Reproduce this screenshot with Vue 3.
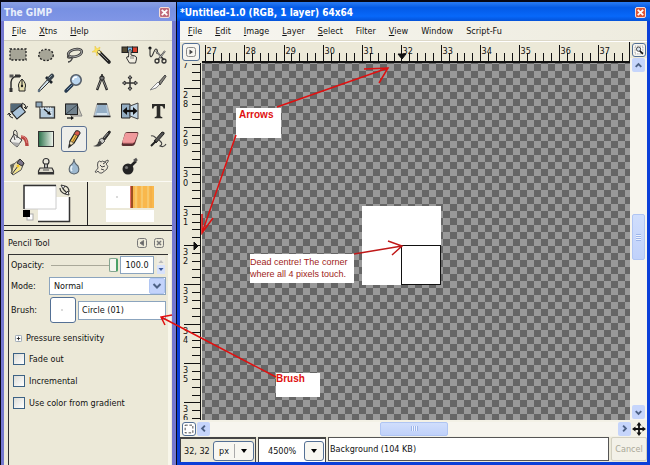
<script setup>
import { ref, computed, onMounted, onUnmounted } from 'vue'

const O = '#222'
const tools = [
  { name: 'Rectangle select', art: `<rect x="3" y="5" width="16" height="11" fill="#a6a597" stroke="${O}" stroke-width="1.3" stroke-dasharray="2 1.6"/>` },
  { name: 'Ellipse select', art: `<ellipse cx="11" cy="11" rx="7.3" ry="5.6" fill="#a6a597" stroke="${O}" stroke-width="1.3" stroke-dasharray="2 1.6"/>` },
  { name: 'Free select', art: `<ellipse cx="12" cy="9" rx="7" ry="3.6" transform="rotate(-14 12 9)" fill="none" stroke="#333" stroke-width="2.6"/><ellipse cx="12" cy="9" rx="7" ry="3.6" transform="rotate(-14 12 9)" fill="none" stroke="#aaa" stroke-width="1"/><path d="M6 11c-2 1-2 3 0 3s4-1 3 1-2 3-4 3" fill="none" stroke="#444" stroke-width="1.3"/>` },
  { name: 'Fuzzy select', art: `<path d="M4 2l2 3 3-2-1 4 3 1-4 1-1 3-1-4-4 0 3-2z" fill="#ffe55a" stroke="#e8c84a" stroke-width=".6"/><path d="M8 8l10 10" stroke="#222" stroke-width="3.6" stroke-linecap="round"/><path d="M8 8l9 9" stroke="#8b8b86" stroke-width="1"/><path d="M7 7l2 2" stroke="#fff6b0" stroke-width="2.4"/>` },
  { name: 'Select by color', art: `<rect x="3" y="3" width="5.500" height="5.500" fill="#544b35" stroke="#222"/><rect x="8.500" y="3" width="5" height="5.500" fill="#7cb6e6" stroke="#222"/><rect x="13.500" y="3" width="5" height="5.500" fill="#d8402c" stroke="#222"/><path d="M10 6q1.500-1 2 0v5l4 1q2 .5 1.500 3l-1 4h-6l-3-5q0-2 2-1z" fill="#f1eee2" stroke="#333"/><path d="M12 12v3M14 12v3" stroke="#555" stroke-width=".7"/>` },
  { name: 'Scissors', art: `<circle cx="3" cy="4" r="1.600" fill="#111"/><path d="M3 4v7q1 4 3-1t3-5q2 0 1 5" fill="none" stroke="#333" stroke-width="1.100"/><path d="M18 7l-7 9M9 7l8 9" stroke="#333" stroke-width="1.800"/><path d="M18 7l-6 8M9 7l5 6" stroke="#ccc" stroke-width=".8"/><circle cx="10" cy="17" r="2" fill="none" stroke="#333" stroke-width="1.300"/><circle cx="17" cy="17" r="2" fill="none" stroke="#333" stroke-width="1.300"/>` },
  { name: 'Paths', art: `<path d="M4 19V10Q5 3 14 4" fill="none" stroke="#222" stroke-width="1.400"/><rect x="2.500" y="2.500" width="4" height="3" fill="#555"/><rect x="2.500" y="16" width="3" height="4" fill="#333"/><rect x="8" y="2.500" width="5" height="3" fill="#333"/><path d="M15 7q5 5 3 9v3h-6v-3q-2-4 3-9z" fill="#e6dfb2" stroke="#222"/><path d="M15 8v6" stroke="#222"/><circle cx="15" cy="14" r="1.200" fill="#222"/>` },
  { name: 'Color picker', art: `<path d="M5 16L13 7l2 2-8 8q-3 3-3 1z" fill="#cfe0ea" stroke="#333"/><path d="M11 5l6 6" stroke="#1d2329" stroke-width="2.600"/><path d="M14 7l3-3" stroke="#39434c" stroke-width="4.500" stroke-linecap="round"/><path d="M14 6l3-3" stroke="#8da0ac" stroke-width="1"/><path d="M4 17q-2 3 0 3t0-3" fill="#9cb8c8" stroke="#567"/>` },
  { name: 'Magnify', art: `<path d="M3 19l6-6" stroke="#26394e" stroke-width="3.400" stroke-linecap="round"/><path d="M4 18l5-5" stroke="#7393b1" stroke-width="1"/><circle cx="13" cy="8" r="5.200" fill="#b9d5ef" stroke="#555e69" stroke-width="1.600"/><path d="M10 8q0-3 4-3" stroke="#fff" stroke-width="1.600" fill="none"/>` },
  { name: 'Measure', art: `<path d="M11 5L6 18M11 5l5 13" stroke="#222" stroke-width="2.400"/><path d="M11 6L6 17M11 6l5 11" stroke="#a5a5a0" stroke-width=".8"/><circle cx="11" cy="6" r="2.200" fill="#777" stroke="#222"/><path d="M11 2v3" stroke="#222" stroke-width="1.500"/>` },
  { name: 'Move', art: `<path d="M11 5v12M5 11h12" stroke="#333" stroke-width="1.500"/><path d="M11 3.500L9 6h4zM11 18.500L9 16h4zM3.500 11L6 9v4zM18.500 11L16 9v4z" fill="#ddd" stroke="#222" stroke-width="1"/>` },
  { name: 'Crop', art: `<path d="M5 17l6-6 2 1q-3 5-8 5z" fill="#fff" stroke="#999"/><path d="M3 18q7-1 10-6l-2-2z" fill="#f8f8f8" stroke="#888"/><path d="M12 10l6-7q2 1 0 3l-5 7z" fill="#85837c" stroke="#444"/>` },
  { name: 'Rotate', art: `<rect x="4" y="4" width="11" height="8" fill="#334" stroke="#222"/><rect x="4" y="4" width="10" height="7" fill="#536978"/><rect x="6" y="8" width="11" height="8" transform="rotate(-40 12 12)" fill="#a9c3d9" stroke="#222"/><path d="M15 3q4 1 4 5M17 7l2 2 1.500-3M6 18q-4-1-4-4M0.500 15l1.500-2 2 2" fill="none" stroke="#222"/>` },
  { name: 'Scale', art: `<rect x="5" y="7" width="14.500" height="11" fill="#b4cadb" stroke="#333" stroke-width="1.300"/><rect x="1" y="2" width="6" height="5" fill="#8fa9bd" stroke="#333"/><path d="M5 8h11v9" fill="none" stroke="#fff" stroke-dasharray="1.500 1"/><path d="M9 9l6 5" stroke="#111" stroke-width="1.300"/><path d="M16 15l-4-1 2.500-3z" fill="#111"/>` },
  { name: 'Shear', art: `<path d="M3 4h11l5 12H8z" fill="#c9c6b9" stroke="#888"/><rect x="2.500" y="4" width="12" height="10.500" fill="#71818c" stroke="#222"/><path d="M3 14L14 5" stroke="#394851"/><path d="M4 18h5" stroke="#111" stroke-width="1.200"/><path d="M8 16l3 2-3 2z" fill="#111"/>` },
  { name: 'Perspective', art: `<path d="M6 4h10l3 12H3z" fill="#b5cadc" stroke="#aaa"/><path d="M7 5h8l1 8H5z" fill="#93adc4"/><path d="M6 4h10M2.500 16.500h17" stroke="#222" stroke-width="1.500"/><path d="M6 14h10" stroke="#e2edf5" stroke-width="1.500"/>` },
  { name: 'Flip', art: `<path d="M2.500 4H11v14H2.500z" fill="#93adc2" stroke="#222"/><path d="M11 6l8-3v16l-8-3z" fill="#c3d7e6" stroke="#444"/><path d="M6 11h10" stroke="#111" stroke-width="2.200"/><path d="M3.500 11L8 7v8zM18.500 11L14 7v8z" fill="#111"/>` },
  { name: 'Text', art: `<path d="M5 4h13v4.500h-1.500q0-2.500-2-2.500H13.300v9.500q0 1.500 2 1.500v1.300H7.700V17q2 0 2-1.500V6H8.500Q6.500 6 6.500 8.500H5z" fill="#2b2b29"/>` },
  { name: 'Bucket fill', art: `<path d="M7 6l8 6-5 7-7-6z" fill="#eeeeea" stroke="#333"/><path d="M4 14l6 5 3-4z" fill="#aaa"/><path d="M8 12Q5 3 8 2q3 1 2 8" fill="none" stroke="#444"/><path d="M14 9q6 0 6 9" stroke="#b84642" stroke-width="3.500" fill="none"/><path d="M14 8q5 0 6 7" stroke="#e8908a" stroke-width=".8" fill="none"/>` },
  { name: 'Blend', art: `<defs><linearGradient id="gb"><stop offset="0" stop-color="#2a714a"/><stop offset="1" stop-color="#f4f7ef"/></linearGradient></defs><rect x="3.500" y="3.500" width="15" height="15" fill="url(#gb)" stroke="#333"/>` },
  { name: 'Pencil', art: `<path d="M6 19l1-6 6-10q3-1 4 2l-6 10z" fill="#f0c751" stroke="#222" stroke-width="1.200"/><path d="M13 3q3-1 4 2l-2 3-4-2z" fill="#d8574a" stroke="#333" stroke-width=".7"/><path d="M7 13l4 2-5 4z" fill="#f3dfb6" stroke="#333" stroke-width=".6"/><path d="M6 19l.4-3 2 1z" fill="#111"/><path d="M9.500 14l4-7" stroke="#a05e28" stroke-width="1"/>` },
  { name: 'Paintbrush', art: `<path d="M11 11l7-8q2 0 1 2l-6 8z" fill="#333" stroke="#222"/><path d="M8 12l3-2 3 3-3 3z" fill="#c8c8c4" stroke="#555"/><path d="M2 18q5-1 5-4 2-2 3 0 2 2-1 4-3 1-7 0z" fill="#444"/><path d="M13 10l4-5" stroke="#aaa" stroke-width=".8"/>` },
  { name: 'Eraser', art: `<path d="M6 5q1-1 3-1h9q2 0 1 3l-3 9q-1 2-3 2H4q-2 0-1-3z" fill="#5b3032"/><path d="M7 5h11q1 0 .5 2l-3 7q-.5 1-2 1H4q-1 0-.5-2l2.500-7q.3-1 1-1z" fill="#f09a9c"/><path d="M4 15h10l2-2" stroke="#d9787d" fill="none"/>` },
  { name: 'Airbrush', art: `<path d="M7 13L15 4q3 0 2 2L9 15z" fill="#555" stroke="#222"/><path d="M4 8q2-1 5 2M12 12q5 4 1 6 4 2 6-2" fill="none" stroke="#444" stroke-width="1.100"/><path d="M4 18l5-5" stroke="#222" stroke-width="2"/>` },
  { name: 'Ink', art: `<path d="M13 3l4 4-3 7-8 5-2-2 3-9z" fill="#e8ddac" stroke="#555"/><path d="M13 3l4 4-2 3-5-3z" fill="#7b7488" stroke="#333"/><path d="M5 18L3 9l4-2z" fill="#64665b"/><path d="M5 18l6-8" stroke="#333"/><circle cx="11" cy="10" r="1.500" fill="#f3c51e"/><path d="M6 18l8-5-2-2z" fill="#f6e57c"/>` },
  { name: 'Clone', art: `<circle cx="11" cy="5.500" r="3" fill="#e9e7dc" stroke="#333" stroke-width="1.200"/><path d="M9.500 8h3v4h-3z" fill="#bbb" stroke="#333"/><path d="M5 12h12l1.500 3v3h-15v-3z" fill="#dddbce" stroke="#333" stroke-width="1.200"/><path d="M4 17h14" stroke="#333" stroke-width="2"/><path d="M8 14h6" stroke="#555"/>` },
  { name: 'Convolve', art: `<path d="M11 3q0 4 4 7 3 7-4 8-7-1-4-8 4-3 4-7z" fill="#9eb9cf" stroke="#59646d" stroke-width="1.100"/><path d="M9 10q-2 3 0 5" stroke="#e6f1f8" stroke-width="1.600" fill="none"/>` },
  { name: 'Smudge', art: `<path d="M7 6q2-2 3 0 2-2 3 0l4-2q1 1-1 3l-1 1q3 2 1 5l-5 4q-3 1-4-2-1 2-3 1l3-4q-1-3 0-6z" fill="#eee9d9" stroke="#555"/><path d="M9 9l2 2 3-1M10 13l3 1M12 8l3-2" fill="none" stroke="#444"/>` },
  { name: 'Dodge', art: `<path d="M11 11l6-6" stroke="#222" stroke-width="2.600"/><circle cx="9" cy="13" r="5.500" fill="#242424"/><circle cx="7.500" cy="11.500" r="1.600" fill="#777"/><path d="M15 5l3-2" stroke="#555" stroke-width="3"/>` },
]

const toolMenus = ['File', 'Xtns', 'Help']
const imageMenus = ['File', 'Edit', 'Image', 'Layer', 'Select', 'Filter', 'View', 'Window', 'Script-Fu']
const plain = ['Filter', 'Window', 'Script-Fu']
const options = ref([
  { label: 'Fade out', on: false },
  { label: 'Incremental', on: false },
  { label: 'Use color from gradient', on: false },
])
const opacity = ref(100)
const brush = ref('Circle (01)')
const zoomLevel = ref('4500%')

const size = ref({ w: window.innerWidth, h: window.innerHeight })
const measure = () => { size.value = { w: window.innerWidth, h: window.innerHeight } }
onMounted(() => window.addEventListener('resize', measure))
onUnmounted(() => window.removeEventListener('resize', measure))

const unit = 39.3
const makeTicks = (first, start, length) => {
  const out = []
  for (let i = -5; start + (i * unit) / 5 < length; i++) {
    out.push({
      at: Math.round(start + (i * unit) / 5) + 0.5,
      major: i % 5 === 0,
      value: String(first + i / 5),
    })
  }
  return out
}
const hTicks = computed(() => makeTicks(27, 3, size.value.w - 222).filter((t) => t.at > 0))
const vTicks = computed(() => makeTicks(28, 25, size.value.h - 108))
</script>

<template>
  <main class="desktop">
    <section class="toolbox">
      <header class="title">
        <h1>The GIMP</h1>
        <button class="close" aria-label="Close toolbox"><svg viewBox="0 0 10 10"><path d="M2 2l6 6M8 2l-6 6" /></svg></button>
      </header>
      <nav class="menu">
        <button v-for="m in toolMenus" :key="m"><u>{{ m[0] }}</u>{{ m.slice(1) }}</button>
      </nav>
      <div class="tools">
        <button v-for="t in tools" :key="t.name" :aria-label="t.name" :class="{ active: t.name === 'Pencil' }">
          <svg viewBox="0 0 22 22" v-html="t.art"></svg>
        </button>
      </div>
      <div class="swatches">
        <div class="cell">
          <svg class="colors" viewBox="0 0 50 42">
            <path d="M15 14h32v25H15z" fill="#fff" /><path d="M15 38.500h31.500V14" fill="none" stroke="#333" stroke-width="1.500" />
            <path d="M1 2h32v24H1z" fill="#fff" stroke="#ccc" /><path d="M1 26V2.500h32" fill="none" stroke="#333" stroke-width="1.500" />
            <path d="M34 0h16v14H34z" fill="#ece9d8" />
            <rect x="4" y="31" width="6" height="6" fill="#fff" stroke="#aaa" /><rect x="0" y="27" width="7" height="7" fill="#000" />
            <path d="M38 2l4 1-2 3zM46 12l-4-1 3-3z" fill="#fff" stroke="#333" /><path d="M40 6l4 4M42 3q4 1 4 6M37 5q0 4 5 6" fill="none" stroke="#333" stroke-width="1.200" />
          </svg>
        </div>
        <div class="cell">
          <svg class="previews" viewBox="0 0 48 38">
            <path d="M0 1h24v22H0zM0 25h48v12H0z" fill="#fff" /><circle cx="11" cy="12" r=".8" fill="#aaa" />
            <path d="M25 1h23v22H25z" fill="#f9b84c" /><path d="M30 1v22M36 1v22M42 1v22" stroke="#f7c86c" stroke-width="2" /><path d="M33 1v22M45 1v22" stroke="#f0a844" />
            <path d="M24.500 1v22" stroke="#e56b6b" /><path d="M26 1v22" stroke="#7c2d12" stroke-width="1.500" />
          </svg>
        </div>
      </div>
      <div class="dock">
        <header class="dock-head">
          <h2>Pencil Tool</h2>
          <button aria-label="Tab menu"><svg viewBox="0 0 10 10"><rect x=".5" y=".5" width="9" height="9" rx="2" /><path d="M6.500 2.500v5L3 5z" fill="#666" /></svg></button>
          <button aria-label="Close tab"><svg viewBox="0 0 10 10"><rect x=".5" y=".5" width="9" height="9" rx="2" /><path d="M3 3l4 4M7 3L3 7" stroke-width="1.500" /></svg></button>
        </header>
        <div class="panel">
          <div class="row opacity">
            <label for="op">Opacity:</label>
            <input id="op" v-model="opacity" class="range" type="range" min="0" max="100" />
            <input class="num" aria-label="Opacity value" value="100.0" />
            <span class="spin">
              <button aria-label="Increase" disabled><svg viewBox="0 0 8 8"><path d="M1.500 6L4 3l2.500 3z" fill="#bbb" /></svg></button>
              <button aria-label="Decrease"><svg viewBox="0 0 8 8"><path d="M1.500 2L4 5l2.500-3z" fill="#3c5a9c" /></svg></button>
            </span>
          </div>
          <div class="row mode">
            <label for="mode">Mode:</label>
            <div class="select">
              <select id="mode"><option>Normal</option></select>
              <svg class="drop" viewBox="0 0 16 16"><rect x=".5" y=".5" width="15" height="15" rx="1.500" fill="#c3d3fb" stroke="#b1c6f3" /><path d="M4.500 6L8 9.500 11.500 6" fill="none" stroke="#4d6185" stroke-width="2" /></svg>
            </div>
          </div>
          <div class="row brush">
            <label for="brush">Brush:</label>
            <button class="preview" aria-label="Choose brush"><svg viewBox="0 0 22 22"><circle cx="10" cy="11" r=".8" fill="#aaa" /></svg></button>
            <input id="brush" v-model="brush" />
          </div>
          <button class="expander"><svg viewBox="0 0 8 8"><rect x=".5" y=".5" width="7" height="7" rx="1" fill="#fff" stroke="#8b9bac" /><path d="M4 2v4M2 4h4" stroke="#222" /></svg>Pressure sensitivity</button>
          <label v-for="o in options" :key="o.label" class="check"><input v-model="o.on" type="checkbox" />{{ o.label }}</label>
        </div>
      </div>
    </section>

    <section class="image">
      <header class="title">
        <h1>*Untitled-1.0 (RGB, 1 layer) 64x64</h1>
        <button class="close" aria-label="Close image"><svg viewBox="0 0 10 10"><path d="M2 2l6 6M8 2l-6 6" /></svg></button>
      </header>
      <nav class="menu">
        <button v-for="m in imageMenus" :key="m"><template v-if="plain.includes(m)">{{ m }}</template><template v-else><u>{{ m[0] }}</u>{{ m.slice(1) }}</template></button>
      </nav>
      <div class="view">
        <div class="corner"><button aria-label="Image menu"><svg viewBox="0 0 10 10"><rect x=".5" y=".5" width="9" height="9" rx="2" fill="none" stroke="#888" /><path d="M3.500 2.500v5L7 5z" fill="#444" /></svg></button></div>
        <svg class="ruler horizontal">
          <g v-for="t in hTicks" :key="t.at">
            <line :x1="t.at" :x2="t.at" :y1="t.major ? 3 : 11" y2="19" />
            <text v-if="t.major" :x="t.at + 1" y="12">{{ t.value }}</text>
          </g>
          <path d="M196 12h8l-4 5z" />
        </svg>
        <button class="fit" aria-label="Zoom with window"><svg viewBox="0 0 14 14"><rect x="2.500" y="2.500" width="9" height="9" fill="#fff" stroke="#888" stroke-dasharray="1 1" /><circle cx="6.500" cy="6" r="2.500" fill="#d8e3ee" stroke="#333" /><path d="M8 8l3.500 3.500" stroke="#111" stroke-width="2" /></svg></button>
        <svg class="ruler vertical">
          <g v-for="t in vTicks" :key="t.at">
            <line :x1="t.major ? 4 : 12" x2="20" :y1="t.at" :y2="t.at" />
            <template v-if="t.major"><text v-if="t.at > 0" x="3" :y="t.at + 9">{{ t.value[0] }}</text><text x="3" :y="t.at + 18">{{ t.value[1] }}</text></template>
          </g>
          <path d="M14 179v8l4-4z" />
        </svg>
        <div class="canvas">
          <div class="pixels"></div>
          <div class="pixel"></div>
        </div>
        <div class="scroll down">
          <button aria-label="Scroll up"><svg viewBox="0 0 14 14"><path d="M4 8.500L7 5.500l3 3" /></svg></button>
          <span class="gap before"></span><span class="thumb"><i></i></span><span class="gap"></span>
          <button aria-label="Scroll down"><svg viewBox="0 0 14 14"><path d="M4 5.500L7 8.500l3-3" /></svg></button>
        </div>
        <div class="across">
          <button class="mask" aria-label="Quick mask"><svg viewBox="0 0 14 14"><rect x="2.500" y="2.500" width="9" height="9" fill="#fff" stroke="#333" stroke-dasharray="3 2" /></svg></button>
          <div class="scroll">
            <button aria-label="Scroll left"><svg viewBox="0 0 14 14"><path d="M8.500 4L5.500 7l3 3" /></svg></button>
            <span class="gap"></span><span class="thumb"><i></i></span><span class="gap"></span>
            <button aria-label="Scroll right"><svg viewBox="0 0 14 14"><path d="M5.500 4L8.500 7l-3 3" /></svg></button>
          </div>
          <button class="nav" aria-label="Navigate"><svg viewBox="0 0 14 14"><path d="M7 2v10M2 7h10" stroke="#111" stroke-width="1.800" /><path d="M7 0L4.500 3.500h5zM7 14l-2.500-3.500h5zM0 7l3.500-2.500v5zM14 7l-3.500-2.500v5z" fill="#111" /></svg></button>
        </div>
      </div>
      <footer class="status">
        <div class="sunk position"><output>32, 32</output><button class="unit">px<i></i><svg viewBox="0 0 8 6"><path d="M1 1h6L4 5z" /></svg></button></div>
        <div class="sunk zoom"><input v-model="zoomLevel" aria-label="Zoom" /><button class="unit" aria-label="Zoom levels"><svg viewBox="0 0 8 6"><path d="M1 1h6L4 5z" /></svg></button></div>
        <div class="message">Background (104 KB)</div>
        <button class="cancel" disabled>Cancel</button>
      </footer>
    </section>

    <div class="notes">
      <p class="note arrows">Arrows</p>
      <p class="note centre">Dead centre! The corner<br />where all 4 pixels touch.</p>
      <p class="note brush-note">Brush</p>
      <svg viewBox="0 0 650 465">
        <g fill="none" stroke="#e01010" stroke-width="1.500">
          <path d="M277 107L388 68M364 69l24-1-9 15" />
          <path d="M236 135l-34 98M202 214v19l11-15" />
          <path d="M276 377L161 317M172 315l-11 2 4 8" />
          <path d="M354 254l48-8M388 241l14 5-10 9" stroke="#c01818" />
        </g>
      </svg>
    </div>
  </main>
</template>

<style>
body { background: #000; overflow: hidden; }
</style>

<style scoped>
* { box-sizing: border-box; }
.desktop {
  position: relative; display: grid; grid-template-columns: 175px 1fr; column-gap: 1px;
  height: 100vh; padding: 2px 0 0 1px; background: #070714; color: #111;
  font: 9px/12px "DejaVu Sans Condensed", "DejaVu Sans", sans-serif;
}
button, input, select { font: inherit; color: inherit; margin: 0; padding: 0; border: 0; background: none; min-width: 0; }
button, span { display: flex; align-items: center; justify-content: center; }
svg { display: block; }
h1, h2, p { margin: 0; font: inherit; }
.toolbox, .image { display: flex; flex-direction: column; min-height: 0; min-width: 0; }
.toolbox { border: solid #7478cf; border-width: 0 4px 0 3px; background: #ece9d8; }
.image { border: solid #0b3fd8; border-width: 0 3px 3px; background: #ece9d8; }
.title { display: flex; align-items: center; justify-content: space-between; height: 19px; flex: none; }
.title h1 { font-size: 10px; font-weight: bold; white-space: nowrap; }
.toolbox .title { margin: 0 -4px 0 -3px; padding: 2px 6px 0 3px; background: linear-gradient(#8aa0e4, #7790e2 35%, #8096e6); color: #e8eefb; }
.image .title { margin: 0 -3px; padding: 2px 4px 0 3px; background: linear-gradient(#2a7cf4, #045ae6 30%, #0768fa 75%, #0452d8); color: #fff; }
.close { width: 11px; height: 11px; border: 1px solid #f3dcd8; border-radius: 2px; background: #dd5536; }
.toolbox .close { background: #c06b7c; }
.close svg { width: 9px; height: 9px; stroke: #fff; stroke-width: 2; }
.menu { display: flex; gap: 13px; height: 20px; flex: none; padding: 0 8px; border-bottom: 1px solid #d0cdbf; background: linear-gradient(90deg, #f7f6f1, #eeecdf); }
.image .menu { border-bottom-color: #dcd8c8; }
u { text-underline-offset: 1px; }
.tools { display: grid; grid-template-columns: repeat(6, 28px); grid-auto-rows: 28px; }
.tools button svg { width: 22px; height: 22px; }
.tools .active { border: 1px solid #5b7193; border-radius: 3px; background: #eeeeea; margin: 1px; }
.swatches { display: grid; grid-template-columns: 84px 1fr; height: 45px; border-bottom: 1px solid #222; border-top: 1px solid #fbfaf4; flex: none; }
.cell { display: flex; align-items: center; justify-content: center; }
.cell:first-child { border-right: 1px solid #222; padding-left: 4px; }
.colors { width: 50px; height: 42px; }
.previews { width: 48px; height: 38px; }
.dock { display: flex; flex-direction: column; flex: 1; margin-top: 4px; border-top: 1px solid #222; padding: 0 4px; }
.dock-head { display: flex; align-items: center; gap: 7px; height: 23px; padding: 0 4px 0 0; }
.dock-head h2 { flex: 1; }
.dock-head svg { width: 10px; height: 10px; fill: none; stroke: #777; }
.panel { flex: 1; border: solid #333; border-width: 1px 0 0 1px; padding: 0 2px 0 2px; box-shadow: 3px 0 #f8f6ea; }
.row { display: grid; align-items: center; }
.opacity { grid-template-columns: 38px 1fr 34px 10px; height: 20px; column-gap: 2px; }
.range { appearance: none; width: 100%; height: 16px; background: linear-gradient(#a9a899, #a9a899) center / 100% 1px no-repeat; }
.range::-webkit-slider-thumb { appearance: none; width: 9px; height: 14px; border: 1px solid #83a590; border-right: 2px solid #4ba067; border-radius: 2px; background: #f5f5f0; }
.num { height: 18px; border: 1px solid #8ba4be; background: #fff; text-align: center; width: 100%; }
.spin { flex-direction: column; }
.spin button { height: 9px; width: 8px; background: #d8e2fb; }
.spin button:disabled { background: #eeece2; }
.spin svg { width: 8px; height: 8px; }
.mode { grid-template-columns: 38px 1fr; height: 21px; }
.select { position: relative; }
select { appearance: none; width: 100%; height: 18px; border: 1px solid #8ba4be; background: #fff; padding-left: 4px; }
.drop { position: absolute; right: 1px; top: 1px; width: 16px; height: 16px; pointer-events: none; }
.brush { grid-template-columns: 38px 27px 1fr; column-gap: 1px; height: 28px; }
.preview { width: 26px; height: 26px; border: 1px solid #547095; border-radius: 3px; background: #fff; }
.preview svg { width: 22px; height: 22px; }
.brush input { height: 19px; border: 1px solid #8ba4be; background: #fff; padding-left: 3px; width: 100%; }
.expander { gap: 4px; margin: 8px 0 4px 4px; }
.expander svg { width: 7px; height: 7px; }
.check { display: flex; align-items: center; gap: 4px; height: 22px; padding-left: 2px; }
.check input { appearance: none; width: 12px; height: 12px; border: 1px solid #3c6285; background: linear-gradient(135deg, #dcdcd6, #fff); }
.view { display: grid; grid-template-columns: 22px 1fr 17px; grid-template-rows: 21px 1fr 17px; flex: 1; min-height: 0; border-top: 1px solid #fff; }
.corner { padding: 1px 2px; }
.corner button { width: 18px; height: 18px; border: 1px solid #547095; border-radius: 3px; background: #f7f6f0; }
.corner svg { width: 10px; height: 10px; }
.ruler { width: 100%; height: 100%; overflow: hidden; stroke: #111; fill: #111; }
.ruler text { stroke: none; font-size: 9px; }
.horizontal { border-bottom: 2px solid #111; border-right: 1px solid #111; }
.vertical { width: 21px; border-right: 1px solid #111; }
.fit { width: 14px; height: 14px; margin: 1px 2px; border: 1px solid #547095; border-radius: 3px; background: #f7f6f0; }
.fit svg { width: 12px; height: 12px; }
.canvas { position: relative; background: repeating-conic-gradient(#999 0 25%, #666 0 50%) -4px 1px / 14px 14px; overflow: hidden; }
.pixels { position: absolute; left: 160px; top: 143px; width: 79px; height: 79px; background: #fff; }
.pixel { position: absolute; left: 199px; top: 182px; width: 40px; height: 40px; border: 1px solid #111; }
.scroll { display: flex; flex: 1; background: #f7f5ee; min-width: 0; }
.scroll button { width: 13px; height: 14px; flex: none; border-radius: 2px; background: #c6d5fb; }
.scroll button svg { width: 13px; height: 13px; fill: none; stroke: #4d6185; stroke-width: 2; }
.gap { flex: 50; }
.thumb { width: 68px; border: 1px solid #b0c5f3; border-radius: 2px; background: linear-gradient(#d0defc, #c0d1fa); }
.thumb i { width: 7px; height: 5px; background: repeating-linear-gradient(90deg, #9db5ea 0 1px, #edf3fe 1px 2px); }
.scroll.down { flex-direction: column; align-items: center; margin-top: -5px; padding-bottom: 1px; }
.down .before { flex: 49; }
.down .thumb { width: 13px; height: 46px; }
.down .thumb i { width: 5px; height: 7px; background: repeating-linear-gradient(#9db5ea 0 1px, #edf3fe 1px 2px); }
.across { grid-column: 1 / -1; display: flex; align-items: center; gap: 1px; padding: 0 1px; background: #f3f1e6; }
.mask { width: 14px; height: 14px; margin-left: 1px; border: 1px solid #547095; border-radius: 3px; background: #fff; }
.mask svg { width: 12px; height: 12px; }
.nav svg { width: 14px; height: 14px; }
.status { display: flex; gap: 2px; height: 25px; flex: none; }
.sunk { display: flex; align-items: center; justify-content: space-between; border: solid #444; border-width: 2px 1px 0 1px; padding: 0 1px 0 3px; white-space: nowrap; flex: none; }
.position { width: 76px; }
.zoom { width: 68px; background: #fff; padding: 0 1px 0 9px; }
.zoom input { width: 34px; }
.unit { height: 20px; gap: 5px; padding: 0 5px; border: 1px solid #547095; border-radius: 3px; background: #f8f7f1; }
.unit i { width: 1px; height: 14px; background: #aaa; }
.unit svg { width: 8px; height: 6px; }
.message { flex: 1; display: flex; align-items: center; border: 1px solid #555; background: #fff; margin-bottom: 1px; white-space: nowrap; padding-left: 1px; }
.cancel { width: 36px; flex: none; margin-bottom: 1px; border: 1px solid #d2cfc0; border-radius: 2px; background: #f3f1e8; color: #aaa898; }
.notes { position: absolute; inset: 0; pointer-events: none; }
.notes svg { position: absolute; left: 0; top: 0; width: 650px; height: 465px; }
.note { position: absolute; background: #fff; color: #e01010; font: bold 10px/12px "Liberation Sans", sans-serif; white-space: nowrap; }
.arrows { left: 236px; top: 108px; width: 45px; height: 30px; padding: 1px 3px; }
.centre { left: 250px; top: 254px; width: 104px; height: 29px; padding-top: 2px; font: 9px/12px "Liberation Sans", sans-serif; color: #a01c20; }
.brush-note { left: 276px; top: 373px; width: 44px; height: 24px; }
</style>
